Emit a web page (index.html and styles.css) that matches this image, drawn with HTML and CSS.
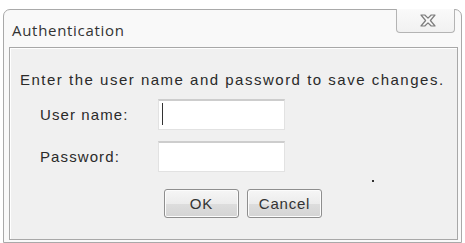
FILE: index.html
```html
<!DOCTYPE html>
<html>
<head>
<meta charset="utf-8">
<link rel="stylesheet" href="styles.css">
</head>
<body>
<div class="window">
  <div class="titlebar">
    <span class="title">Authentication</span>
    <button class="close" aria-label="Close">
      <svg width="16" height="13" viewBox="0 0 16 13">
        <path d="M1 1 L4.8 1 L8 4.2 L11.2 1 L15 1 L10.4 6.5 L15 12 L11.2 12 L8 8.8 L4.8 12 L1 12 L5.6 6.5 Z" fill="#f7f7f7" stroke="#7d7d7d" stroke-width="1.2" stroke-linejoin="round"/>
      </svg>
    </button>
  </div>
  <div class="panel">
    <p class="intro">Enter the user name and password to save changes.</p>
    <div class="form">
      <label class="label">User name:</label>
      <div class="field"><span class="caret"></span></div>
      <label class="label">Password:</label>
      <div class="field"></div>
    </div>
    <div class="actions">
      <button class="btn">OK</button>
      <button class="btn">Cancel</button>
      <span class="dot"></span>
    </div>
  </div>
</div>
</body>
</html>
```
FILE: styles.css
```css
html, body {
  margin: 0;
  padding: 0;
  background: #ffffff;
}
body {
  width: 465px;
  height: 243px;
  overflow: hidden;
  font-family: "Liberation Sans", Arial, sans-serif;
  color: #2a2a2a;
}
.window {
  margin: 9px 0 0 3px;
  width: 459px;
  height: 234px;
  border: 1px solid #a9a9a9;
  border-radius: 7px 7px 0 0;
  background: #f9f9f9;
  padding: 0 3px 0 5px;
  box-sizing: border-box;
  display: flex;
  flex-direction: column;
}
.titlebar {
  height: 37px;
  display: flex;
  justify-content: space-between;
  align-items: flex-start;
  flex: none;
}
.title {
  font-family: "Open Sans", sans-serif;
  font-size: 15px;
  letter-spacing: 0.7px;
  color: #333;
  margin: 10px 0 0 3px;
}
.close {
  margin: -1px 3px 0 0;
  width: 59px;
  height: 24px;
  border: 1px solid #b4b4b4;
  border-top: none;
  border-radius: 0 0 4px 4px;
  background: linear-gradient(#fafafa, #f1f1f1);
  padding: 0 0 0 4px;
  display: flex;
  align-items: center;
  justify-content: center;
}
.panel {
  flex: 1;
  margin-bottom: 2px;
  border: 1px solid #a8a8a8;
  box-shadow: inset 1px 1px 0 #ffffff;
  background: #f0f0f0;
  padding: 0 0 0 10px;
  position: relative;
}
.intro {
  margin: 23px 0 0 0;
  font-size: 15px;
  letter-spacing: 1.5px;
  line-height: 17px;
}
.form {
  display: grid;
  grid-template-columns: 118px 127px;
  row-gap: 11px;
  margin: 11px 0 0 20px;
  align-items: center;
}
.label {
  font-size: 15px;
  letter-spacing: 1.1px;
}
.field {
  height: 31px;
  box-sizing: border-box;
  background: #ffffff;
  border: 1px solid #e2e2e2;
  border-top: 2px solid #cdcdcd;
  position: relative;
}
.caret {
  position: absolute;
  left: 3px;
  top: 2px;
  width: 1px;
  height: 22px;
  background: #333;
}
.actions {
  display: flex;
  gap: 8px;
  margin: 17px 0 0 144px;
  position: relative;
}
.btn {
  width: 75px;
  height: 29px;
  border: 1px solid #8e8e8e;
  border-radius: 3px;
  background: linear-gradient(#f6f6f6 0%, #ececec 50%, #dddddd 51%, #d4d4d4 100%);
  box-shadow: inset 0 0 0 1px #fcfcfc;
  font-family: "Liberation Sans", Arial, sans-serif;
  font-size: 15px;
  letter-spacing: 0.8px;
  color: #333;
  padding: 0;
}
.dot {
  position: absolute;
  left: 208px;
  top: -9px;
  width: 2px;
  height: 2px;
  background: #333;
}
```
